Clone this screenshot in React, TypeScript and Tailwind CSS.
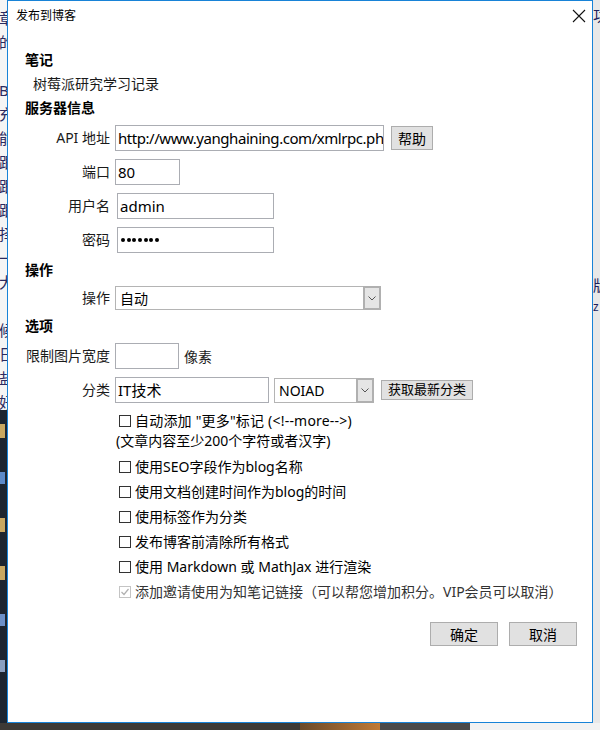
import type { ReactNode } from 'react';

/**
 * 发布到博客 对话框（Windows 10 风格），四周露出一点背后的文档/桌面/任务栏。
 */

const ui = "font-['Segoe_UI','Noto_Sans','Noto_Sans_CJK_SC',sans-serif]";

function Label({ children }: { children: ReactNode }) {
  return <div className="w-[102px] shrink-0 text-right text-[14px] leading-[20px] text-[#1a1a1a]">{children}</div>;
}

function Heading({ children, className = '' }: { children: ReactNode; className?: string }) {
  return <div className={`pl-[17px] h-[20px] text-[14px] leading-[20px] font-bold text-black ${className}`}>{children}</div>;
}

function Field({ className = '', children }: { className?: string; children?: ReactNode }) {
  return (
    <div className={`h-[26px] border border-[#abadb3] bg-white flex items-center px-[2px] overflow-hidden whitespace-nowrap text-[15px] text-black ${className}`}>
      {children}
    </div>
  );
}

function Select({ className = '', value }: { className?: string; value: string }) {
  return (
    <div className={`flex border border-[#b4b4b4] bg-white ${className}`}>
      <div className="flex-1 flex items-center px-[4px] text-[14px] text-black overflow-hidden whitespace-nowrap">{value}</div>
      <div className="w-[18px] -my-px -mr-px border-2 border-[#b0b0b0] bg-[#e5e5e5] flex items-center justify-center">
        <svg width="8" height="5" viewBox="0 0 8 5">
          <polyline points="0.5,0.5 4,4 7.5,0.5" fill="none" stroke="#555" strokeWidth="1" />
        </svg>
      </div>
    </div>
  );
}

function Btn({ className = '', children }: { className?: string; children: ReactNode }) {
  return (
    <div className={`flex items-center justify-center bg-[#e1e1e1] border border-[#adadad] text-black ${className}`}>
      {children}
    </div>
  );
}

function Check({ children, checked = false, disabled = false, className = '' }: { children: ReactNode; checked?: boolean; disabled?: boolean; className?: string }) {
  return (
    <div className={`h-[25px] pl-[111px] flex items-center gap-[4px] ${className}`}>
      <span
        className={`w-[12px] h-[12px] shrink-0 border bg-white flex items-center justify-center ${
          disabled ? 'border-[#c4c4c4]' : 'border-[#333]'
        }`}
      >
        {checked ? (
          <svg width="10" height="10" viewBox="0 0 10 10">
            <polyline points="1.5,5 4,7.5 8.5,2" fill="none" stroke="#b0b0b0" strokeWidth="1.2" />
          </svg>
        ) : null}
      </span>
      <span className={`text-[14px] leading-[20px] whitespace-nowrap ${disabled ? 'text-[#333]' : 'text-black'}`}>{children}</span>
    </div>
  );
}

export default function App() {
  const leftChars = ['章', '的', '', 'B', '充', '能', '跟', '跟', '跟', '择', '一', '大', '', '候', '日', '盐', '好'];

  return (
    <div className={`w-[600px] h-[730px] overflow-hidden flex flex-col bg-white ${ui}`}>
      <div className="h-[723px] flex">
        {/* 背后的文档（左侧露出的一条） */}
        <div className="w-[7px] shrink-0 flex flex-col overflow-hidden">
          <div className="h-[410px] bg-[#f5f5f5] flex flex-col pt-[6px] overflow-hidden">
            {leftChars.map((c, i) => (
              <span key={i} className="h-[24px] -ml-[1px] text-[15px] leading-[24px] text-[#2a2a60] whitespace-nowrap">
                {c || '\u00a0'}
              </span>
            ))}
          </div>
          <div className="flex-1 bg-[#1c2530] flex flex-col items-start gap-[34px] pt-[14px]">
            <span className="w-[5px] h-[14px] bg-[#c9a860]" />
            <span className="w-[5px] h-[12px] bg-[#5c8ac8]" />
            <span className="w-[5px] h-[14px] bg-[#c9a860]" />
            <span className="w-[5px] h-[14px] bg-[#c9a860]" />
            <span className="w-[5px] h-[12px] bg-[#6b90c8]" />
            <span className="w-[5px] h-[12px] bg-[#8aa0c0]" />
          </div>
        </div>

        {/* 对话框 */}
        <div className="w-[586px] shrink-0 border border-[#1883d7] bg-white flex flex-col">
          <div className="h-[30px] flex items-center justify-between pl-[8px] pr-[6px]">
            <span className="text-[12px] text-black">发布到博客</span>
            <svg width="14" height="14" viewBox="0 0 14 14">
              <path d="M1 1 L13 13 M13 1 L1 13" stroke="#111" strokeWidth="1.1" />
            </svg>
          </div>

          <Heading className="mt-[19px]">笔记</Heading>
          <div className="mt-[4px] pl-[25px] h-[20px] text-[14px] leading-[20px] text-[#1a1a1a]">树莓派研究学习记录</div>
          <Heading className="mt-[4px]">服务器信息</Heading>

          <div className="mt-[7px] flex items-center">
            <Label>API 地址</Label>
            <Field className="ml-[5px] w-[269px] tracking-[-0.45px]">http://www.yanghaining.com/xmlrpc.php</Field>
            <Btn className="ml-[7px] w-[42px] h-[24px] text-[14px]">帮助</Btn>
          </div>
          <div className="mt-[8px] flex items-center">
            <Label>端口</Label>
            <Field className="ml-[5px] w-[65px]">80</Field>
          </div>
          <div className="mt-[8px] flex items-center">
            <Label>用户名</Label>
            <Field className="ml-[7px] w-[157px]">admin</Field>
          </div>
          <div className="mt-[8px] flex items-center">
            <Label>密码</Label>
            <Field className="ml-[7px] w-[157px] gap-[1.7px] pl-[3px]">
              {Array.from({ length: 7 }).map((_, i) => (
                <span key={i} className="w-[4px] h-[4px] rounded-full bg-black" />
              ))}
            </Field>
          </div>

          <Heading className="mt-[7px]">操作</Heading>
          <div className="mt-[6px] flex items-center">
            <Label>操作</Label>
            <Select className="ml-[5px] w-[266px] h-[24px]" value="自动" />
          </div>

          <Heading className="mt-[6px]">选项</Heading>
          <div className="mt-[7px] flex items-center">
            <Label>限制图片宽度</Label>
            <Field className="ml-[5px] w-[64px]" />
            <span className="ml-[5px] text-[14px] text-[#1a1a1a]">像素</span>
          </div>
          <div className="mt-[8px] flex items-center">
            <Label>分类</Label>
            <Field className="ml-[5px] w-[154px]">IT技术</Field>
            <Select className="ml-[5px] w-[100px] h-[25px]" value="NOIAD" />
            <Btn className="ml-[7px] w-[92px] h-[20px] text-[13px]">获取最新分类</Btn>
          </div>

          <div className="mt-[5px]">
            <Check className="tracking-[0.2px]">自动添加 "更多"标记 (&lt;!--more--&gt;)</Check>
            <div className="pl-[108px] h-[20px] -mt-[2px] text-[14px] leading-[20px] text-black">(文章内容至少200个字符或者汉字)</div>
            <div className="mt-[3px]">
              <Check>使用SEO字段作为blog名称</Check>
              <Check>使用文档创建时间作为blog的时间</Check>
              <Check>使用标签作为分类</Check>
              <Check>发布博客前清除所有格式</Check>
              <Check>使用 Markdown 或 MathJax 进行渲染</Check>
              <Check checked disabled>
                添加邀请使用为知笔记链接（可以帮您增加积分。VIP会员可以取消）
              </Check>
            </div>
          </div>

          <div className="mt-[18px] flex justify-end gap-[11px] pr-[15px]">
            <Btn className="w-[68px] h-[24px] text-[14px]">确定</Btn>
            <Btn className="w-[68px] h-[24px] text-[14px]">取消</Btn>
          </div>
        </div>

        {/* 右侧露出的文档 */}
        <div className="flex-1 bg-[#e8e8e8] flex flex-col overflow-hidden">
          <span className="mt-[6px] text-[15px] leading-[18px] text-[#20205a] whitespace-nowrap">功</span>
          <span className="mt-[252px] text-[15px] leading-[18px] text-[#20205a] whitespace-nowrap">版</span>
          <span className="mt-[6px] text-[12px] leading-[14px] text-[#20205a] whitespace-nowrap">z</span>
        </div>
      </div>

      {/* 任务栏 */}
      <div className="flex-1 flex">
        <div className="w-[300px] bg-[#3d3a36]" />
        <div className="w-[80px] bg-gradient-to-r from-[#6a4a2a] to-[#c07a35]" />
        <div className="w-[90px] bg-[#4a4a4a]" />
        <div className="flex-1 bg-[#f2f2f2]" />
      </div>
    </div>
  );
}
